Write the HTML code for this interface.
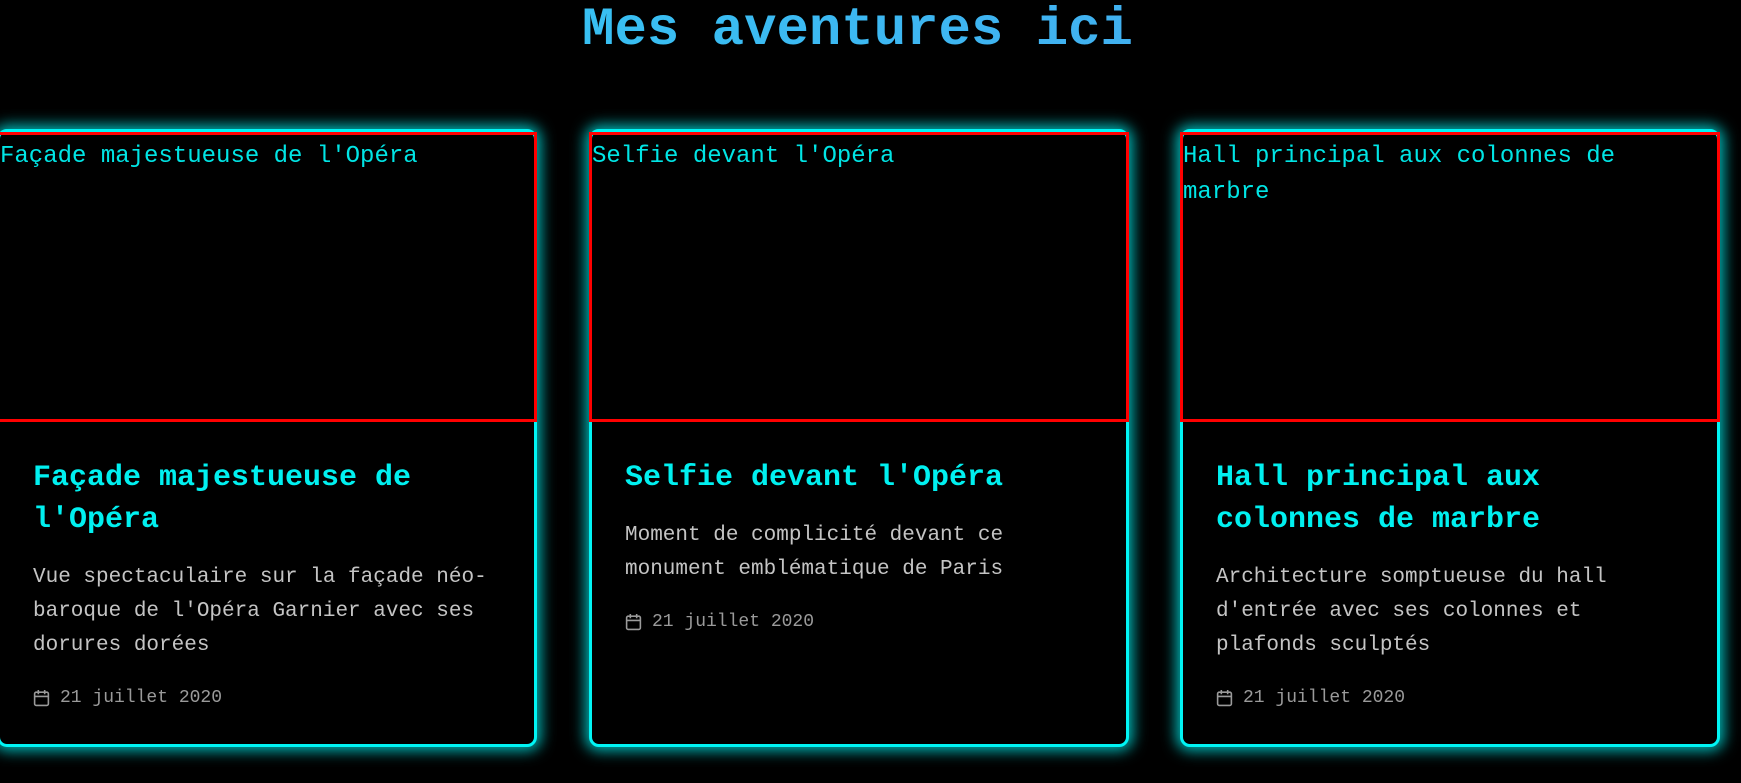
<!DOCTYPE html>
<html><head><meta charset="utf-8"><style>
html,body{margin:0;padding:0;background:#000;width:1741px;height:783px;overflow:hidden;font-family:"Liberation Mono","Courier New",monospace}
h1{position:absolute;top:2px;left:-13px;width:1741px;margin:0;text-align:center;font-size:54px;line-height:58px;font-weight:bold;color:#3cbaf2;background:linear-gradient(90deg,#2fd0f5,#4aa0ee);-webkit-background-clip:text;background-clip:text;-webkit-text-fill-color:transparent}
.card{position:absolute;top:129px;width:540px;height:618px;border:3px solid #00f5f5;border-radius:10px;box-shadow:0 0 14px 4px rgba(0,240,240,.75);background:#000;box-sizing:border-box}
.img{position:absolute;left:-3px;top:0;width:540px;height:290px;border:3px solid #ff0000;box-sizing:border-box;color:#00e5e5;font-size:24px;line-height:36px;padding:4px 30px 0 0}
.body{position:absolute;top:325px;left:33px;right:33px}
h2{margin:0;font-size:30px;line-height:42px;color:#00f0f0;font-weight:bold}
p{margin:20px 0 0;font-size:21px;line-height:34px;color:#c4c4c4}
.date{margin-top:25px;font-size:18px;color:#9a9a9a;display:flex;align-items:center;gap:10px}
</style></head><body>
<h1>Mes aventures ici</h1>

<div class="card" style="left:-3px">
<div class="img">Façade majestueuse de l'Opéra</div>
<div class="body">
<h2>Façade majestueuse de l'Opéra</h2>
<p>Vue spectaculaire sur la façade néo-baroque de l'Opéra Garnier avec ses dorures dorées</p>
<div class="date"><svg width="17" height="18" viewBox="0 0 16 17" fill="none" stroke="#9a9a9a" stroke-width="1.5"><rect x="1.5" y="3" width="13" height="12.5" rx="1.5"/><path d="M1.5 7h13M5 1v4M11 1v4"/></svg>21 juillet 2020</div>
</div></div>

<div class="card" style="left:589px">
<div class="img">Selfie devant l'Opéra</div>
<div class="body">
<h2>Selfie devant l'Opéra</h2>
<p>Moment de complicité devant ce monument emblématique de Paris</p>
<div class="date"><svg width="17" height="18" viewBox="0 0 16 17" fill="none" stroke="#9a9a9a" stroke-width="1.5"><rect x="1.5" y="3" width="13" height="12.5" rx="1.5"/><path d="M1.5 7h13M5 1v4M11 1v4"/></svg>21 juillet 2020</div>
</div></div>

<div class="card" style="left:1180px">
<div class="img">Hall principal aux colonnes de marbre</div>
<div class="body">
<h2>Hall principal aux colonnes de marbre</h2>
<p>Architecture somptueuse du hall d'entrée avec ses colonnes et plafonds sculptés</p>
<div class="date"><svg width="17" height="18" viewBox="0 0 16 17" fill="none" stroke="#9a9a9a" stroke-width="1.5"><rect x="1.5" y="3" width="13" height="12.5" rx="1.5"/><path d="M1.5 7h13M5 1v4M11 1v4"/></svg>21 juillet 2020</div>
</div></div>
</body></html>
